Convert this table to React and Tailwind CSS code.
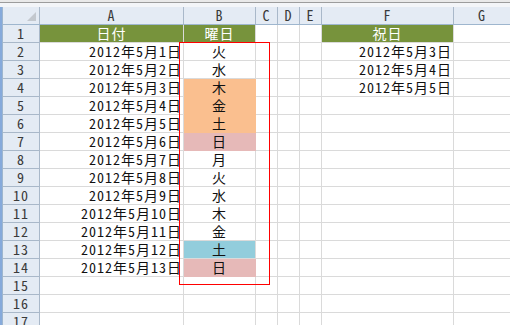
import React from 'react';

const days = [
  { d: '火' },
  { d: '水' },
  { d: '木', bg: 'orange' },
  { d: '金', bg: 'orange' },
  { d: '土', bg: 'orange' },
  { d: '日', bg: 'pink' },
  { d: '月' },
  { d: '火' },
  { d: '水' },
  { d: '木' },
  { d: '金' },
  { d: '土', bg: 'blue' },
  { d: '日', bg: 'pink' },
];

const fills = {
  orange: 'bg-[#fabf8f] border-[#fabf8f]',
  pink: 'bg-[#e6b9b8] border-[#e6b9b8]',
  blue: 'bg-[#92cddc] border-[#92cddc]',
};

const holidays = ['2012年5月3日', '2012年5月4日', '2012年5月5日'];

const cell = 'h-full border-r border-[#dadada] flex items-center';

function ColHeader({ label, w }) {
  return (
    <div className={`${w} h-full border-r border-[#a9b8c9] flex items-center justify-center`}>
      {label}
    </div>
  );
}

function Row({ n }) {
  const green = n === 1;
  const day = n >= 2 && n <= 14 ? days[n - 2] : null;
  const hol = n >= 2 && n <= 4 ? holidays[n - 2] : null;
  const greenCell = 'bg-[#77933c] border-[#77933c] text-white justify-center';

  return (
    <div className="flex h-[18px]">
      <div className="w-[37px] h-full border-r border-b border-[#a9b8c9] bg-[#e4ebf4] flex items-center justify-center text-[#3a3a3a]">
        {n}
      </div>
      <div className={`w-[144px] border-b ${cell} ${green ? greenCell : 'border-b-[#dadada] justify-end pr-[1px]'}`}>
        {green ? '日付' : n <= 14 ? `2012年5月${n - 1}日` : ''}
      </div>
      <div
        className={`w-[72px] border-b ${cell} justify-center ${
          green ? greenCell : day && day.bg ? fills[day.bg] : ''
        }`}
      >
        {green ? '曜日' : day ? day.d : ''}
      </div>
      <div className={`w-[22px] border-b ${cell}`} />
      <div className={`w-[22px] border-b ${cell}`} />
      <div className={`w-[22px] border-b ${cell}`} />
      <div className={`w-[132px] border-b ${cell} ${green ? greenCell : 'justify-end pr-[1px]'}`}>
        {green ? '祝日' : hol || ''}
      </div>
      <div className="flex-1 h-full border-b border-[#dadada]" />
    </div>
  );
}

export default function App() {
  const rows = Array.from({ length: 17 }, (_, i) => i + 1);

  return (
    <div className="relative w-[510px] h-[325px] overflow-hidden bg-white text-[14px] leading-[15px] text-[#111] font-['Noto_Sans_CJK_JP',sans-serif] tracking-[1px] [font-feature-settings:'hwid']">
      {/* window top edge */}
      <div className="h-[7px] bg-[#f3f5f8]">
        <div className="h-[2px] bg-[#e9e9e9]" />
        <div className="h-[1px] bg-[#9c9c9c]" />
      </div>

      <div className="flex">
        <div className="w-[3px] bg-[#86aadb] border-r border-[#9eb6ce]" />

        <div className="flex-1">
          {/* column headers */}
          <div className="flex h-[18px] border-b border-[#9eb6ce] bg-[#e4ebf4] text-[#3a3a3a]">
            <div className="w-[37px] h-full border-r border-[#a9b8c9] relative">
              <svg className="absolute left-[24px] top-[5px]" width="9" height="9" viewBox="0 0 9 9">
                <polygon points="9,0 9,9 0,9" fill="#c3c8ce" />
              </svg>
            </div>
            <ColHeader label="A" w="w-[144px]" />
            <ColHeader label="B" w="w-[72px]" />
            <ColHeader label="C" w="w-[22px]" />
            <ColHeader label="D" w="w-[22px]" />
            <ColHeader label="E" w="w-[22px]" />
            <ColHeader label="F" w="w-[132px]" />
            <div className="flex-1 h-full flex items-center justify-center">G</div>
          </div>

          {rows.map(n => (
            <Row key={n} n={n} />
          ))}
        </div>
      </div>

      {/* selection outline */}
      <div className="absolute left-[179px] top-[42px] w-[91px] h-[243px] border border-[#ff0000]" />
    </div>
  );
}
